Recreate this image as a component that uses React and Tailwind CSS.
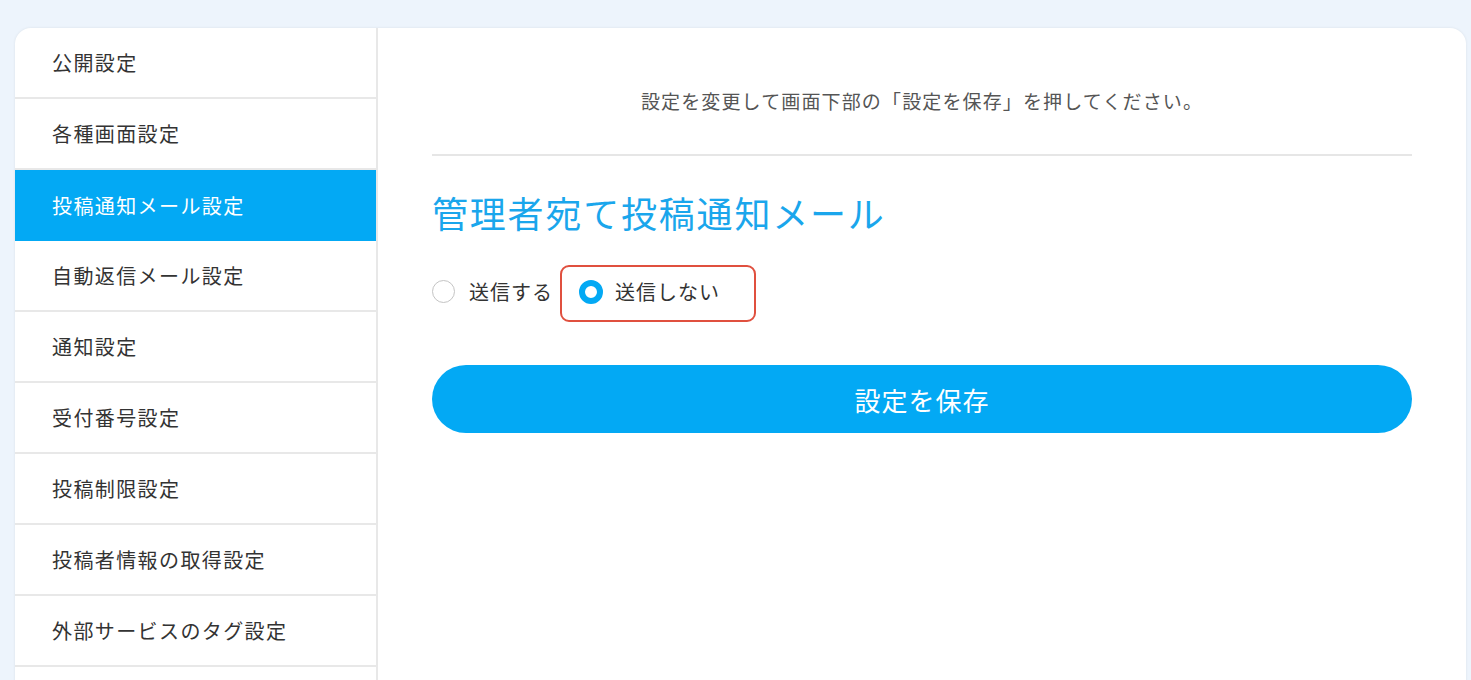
import React from 'react';

const menuItems = [
    '公開設定',
    '各種画面設定',
    '投稿通知メール設定',
    '自動返信メール設定',
    '通知設定',
    '受付番号設定',
    '投稿制限設定',
    '投稿者情報の取得設定',
    '外部サービスのタグ設定',
    '',
];

const font = { fontFamily: '"Noto Sans CJK JP", "Noto Sans", sans-serif' };

const Radio = ({ checked }) =>
    checked ? (
        <span className="w-[24px] h-[24px] rounded-full border-[6px] border-[#03a9f4] bg-white shrink-0" />
    ) : (
        <span className="w-[23px] h-[23px] rounded-full border-[1.5px] border-[#c4c4c4] bg-white shrink-0" />
    );

export default function App() {
    return (
        <div
            className="bg-[#edf4fc] pt-[28px] pl-[15px] pr-[5px] overflow-hidden h-[680px]"
            style={font}
        >
            <div className="flex bg-white rounded-t-[16px] shadow-[0_0_3px_rgba(0,0,0,0.08)] h-[700px] overflow-hidden">

                {/* Sidebar */}
                <aside className="w-[363px] shrink-0 border-r-2 border-[#e8e8e8]">
                    {menuItems.map((label, i) => (
                        <div
                            key={i}
                            className={
                                i === 2
                                    ? 'h-[71px] flex items-center pl-[37px] bg-[#03a9f4] text-white text-[20px] tracking-[0.07em]'
                                    : 'h-[71px] flex items-center pl-[37px] border-b-2 border-[#e8e8e8] text-[#333] text-[20px] tracking-[0.07em]'
                            }
                        >
                            {label}
                        </div>
                    ))}
                </aside>

                {/* Main */}
                <main className="flex-1 px-[54px] pt-[60px]">
                    <p className="text-center text-[19px] leading-[26px] tracking-[0.06em] text-[#555]">
                        設定を変更して画面下部の「設定を保存」を押してください。
                    </p>
                    <div className="mt-[40px] border-t-2 border-[#e6e6e6]" />

                    <h2 className="mt-[32px] text-[36px] leading-[48px] tracking-[0.05em] text-[#1aa6ec]">
                        管理者宛て投稿通知メール
                    </h2>

                    <div className="mt-[29px] flex items-center">
                        <label className="flex items-center gap-[14px] pb-[4px] text-[20px] tracking-[0.05em] text-[#333]">
                            <Radio checked={false} />
                            送信する
                        </label>
                        <label className="ml-[7px] h-[57px] flex items-center gap-[12px] pl-[17px] pr-[34px] pb-[4px] border-2 border-[#e0503f] rounded-[9px] text-[20px] tracking-[0.05em] text-[#333]">
                            <Radio checked />
                            送信しない
                        </label>
                    </div>

                    <button className="mt-[43px] w-full h-[68px] rounded-full bg-[#03a9f4] text-white text-[26px] tracking-[0.04em]">
                        設定を保存
                    </button>
                </main>
            </div>
        </div>
    );
}
